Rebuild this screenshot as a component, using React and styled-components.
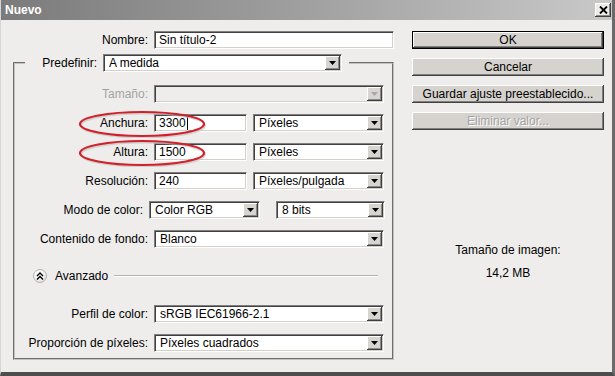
import styled, { createGlobalStyle } from "styled-components";

const GlobalStyle = createGlobalStyle`
  html, body {
    margin: 0;
    padding: 0;
    background: #eeedec;
  }
  body {
    font-family: "Liberation Sans", Arial, sans-serif;
    font-size: 12px;
    color: #000;
  }
  * {
    box-sizing: border-box;
  }
`;

const Arrow = ({ disabled }) => (
  <ArrowBox>
    <svg width="7" height="4" viewBox="0 0 7 4">
      <path d="M0 0h7L3.5 4z" fill={disabled ? "#a8a8a8" : "#000"} />
    </svg>
  </ArrowBox>
);

const Select = ({ width, value, disabled }) => (
  <SelectBox width={width} disabled={disabled}>
    <SelectText>{value}</SelectText>
    <Arrow disabled={disabled} />
  </SelectBox>
);

const FormRow = ({ label, disabled, mark, children }) => (
  <Row>
    <Label disabled={disabled}>{label}</Label>
    <Fields>{children}</Fields>
    {mark && (
      <Mark width="130" height="28" viewBox="0 0 130 28">
        <ellipse cx="65" cy="14" rx="62" ry="12" fill="none" stroke="#bdbdbd" strokeWidth="2" transform="translate(1 1.5)" opacity="0.6" />
        <ellipse cx="65" cy="14" rx="62" ry="12" fill="none" stroke="#d2202b" strokeWidth="2.2" />
      </Mark>
    )}
  </Row>
);

export default function App() {
  return (
    <>
      <GlobalStyle />
      <Dialog>
        <TitleBar>
          <Title>Nuevo</Title>
          <CloseButton>
            <svg width="9" height="8" viewBox="0 0 9 8">
              <path d="M1 0.5l7 7M8 0.5l-7 7" stroke="#000" strokeWidth="1.8" />
            </svg>
          </CloseButton>
        </TitleBar>
        <Body>
          <LeftColumn>
            <NameRow>
              <NameLabel>Nombre:</NameLabel>
              <TextInput width={240}>Sin título-2</TextInput>
            </NameRow>
            <Group>
              <Legend>
                <LegendLabel>Predefinir:</LegendLabel>
                <Select width={239} value="A medida" />
              </Legend>
              <Rows>
                <FormRow label="Tamaño:" disabled>
                  <Select width={230} value="" disabled />
                </FormRow>
                <FormRow label="Anchura:" mark>
                  <TextInput width={93}>
                    3300<Caret />
                  </TextInput>
                  <Select width={131} value="Píxeles" />
                </FormRow>
                <FormRow label="Altura:" mark>
                  <TextInput width={93}>1500</TextInput>
                  <Select width={131} value="Píxeles" />
                </FormRow>
                <FormRow label="Resolución:">
                  <TextInput width={93}>240</TextInput>
                  <Select width={131} value="Píxeles/pulgada" />
                </FormRow>
                <FormRow label="Modo de color:">
                  <Select width={111} value="Color RGB" />
                  <Spacer />
                  <Select width={109} value="8 bits" />
                </FormRow>
                <FormRow label="Contenido de fondo:">
                  <Select width={230} value="Blanco" />
                </FormRow>
                <Advanced>
                  <ToggleCircle>
                    <svg width="8" height="8" viewBox="0 0 8 8">
                      <path d="M1 4l3-3 3 3M1 7.5l3-3 3 3" fill="none" stroke="#000" strokeWidth="1.4" />
                    </svg>
                  </ToggleCircle>
                  <AdvancedText>Avanzado</AdvancedText>
                  <Rule />
                </Advanced>
                <FormRow label="Perfil de color:">
                  <Select width={230} value="sRGB IEC61966-2.1" />
                </FormRow>
                <FormRow label="Proporción de píxeles:">
                  <Select width={230} value="Píxeles cuadrados" />
                </FormRow>
              </Rows>
            </Group>
          </LeftColumn>
          <RightColumn>
            <Button primary>OK</Button>
            <Button>Cancelar</Button>
            <Button>Guardar ajuste preestablecido...</Button>
            <Button disabled>Eliminar valor...</Button>
            <SizeInfo>
              <div>Tamaño de imagen:</div>
              <div>14,2 MB</div>
            </SizeInfo>
          </RightColumn>
        </Body>
      </Dialog>
    </>
  );
}

const Dialog = styled.div`
  width: 615px;
  height: 376px;
  display: flex;
  flex-direction: column;
  background: #eeedec;
  border-left: 1px solid #d6d6d6;
  border-right: 3px solid #6a6a6a;
  border-bottom: 4px solid #4e4e4e;
  overflow: hidden;
`;

const TitleBar = styled.div`
  height: 20px;
  flex: none;
  display: flex;
  align-items: center;
  justify-content: space-between;
  padding: 0 1px 0 4px;
  background: linear-gradient(to right, #7b7b7b 0%, #9c9c9c 45%, #c9c9c9 100%);
`;

const Title = styled.span`
  color: #fff;
  font-weight: bold;
  font-size: 12px;
`;

const CloseButton = styled.div`
  width: 16px;
  height: 14px;
  display: flex;
  align-items: center;
  justify-content: center;
  background: #ecebe8;
  box-shadow: inset -1px -1px #404040, inset 1px 1px #fff, inset -2px -2px #8a8a8a;
`;

const Body = styled.div`
  flex: 1;
  display: flex;
  padding-top: 11px;
`;

const LeftColumn = styled.div`
  width: 393px;
  padding-left: 12px;
  display: flex;
  flex-direction: column;
`;

const NameRow = styled.div`
  display: flex;
  align-items: center;
  gap: 6px;
`;

const NameLabel = styled.span`
  width: 135px;
  text-align: right;
`;

const TextInput = styled.div`
  width: ${(p) => p.width}px;
  height: 18px;
  display: flex;
  align-items: center;
  padding-left: 4px;
  background: #fff;
  border: 1px solid;
  border-color: #7f7f7f #fff #fff #7f7f7f;
  box-shadow: inset 1px 1px #404040, inset -1px -1px #d4d0c8;
  white-space: nowrap;
`;

const Caret = styled.span`
  display: inline-block;
  width: 1px;
  height: 13px;
  background: #000;
  margin-left: 1px;
`;

const SelectBox = styled.div`
  width: ${(p) => p.width}px;
  height: 18px;
  flex: none;
  display: flex;
  align-items: stretch;
  background: ${(p) => (p.disabled ? "#eeedec" : "#fff")};
  border: 1px solid;
  border-color: #7f7f7f #fff #fff #7f7f7f;
  box-shadow: inset 1px 1px #404040, inset -1px -1px #d4d0c8;
  padding: 1px;
`;

const SelectText = styled.span`
  flex: 1;
  display: flex;
  align-items: center;
  padding-left: 4px;
  white-space: nowrap;
  overflow: hidden;
`;

const ArrowBox = styled.span`
  width: 15px;
  flex: none;
  display: flex;
  align-items: center;
  justify-content: center;
  background: #d8d5d0;
  box-shadow: inset -1px -1px #404040, inset 1px 1px #fff, inset -2px -2px #8a8a8a;
`;

const Group = styled.fieldset`
  width: 381px;
  margin: 4px 0 0;
  padding: 13px 7px 6px 0;
  border: 2px groove #c2c2c2;
  min-width: 0;
`;

const Legend = styled.legend`
  display: flex;
  align-items: center;
  gap: 6px;
  margin-left: 10px;
  padding: 0 7px 0 0;
  height: 19px;
`;

const LegendLabel = styled.span`
  width: 72px;
  text-align: right;
`;

const Rows = styled.div`
  display: flex;
  flex-direction: column;
  gap: 11px;
`;

const Row = styled.div`
  position: relative;
  display: flex;
  align-items: center;
  height: 18px;
`;

const Label = styled.span`
  width: 133px;
  margin-right: 6px;
  text-align: right;
  white-space: nowrap;
  color: ${(p) => (p.disabled ? "#a3a3a3" : "#000")};
`;

const Fields = styled.div`
  display: flex;
  gap: 6px;
`;

const Spacer = styled.span`
  width: 4px;
`;

const Mark = styled.svg`
  position: absolute;
  left: 62px;
  top: -4px;
  pointer-events: none;
`;

const Advanced = styled.div`
  display: flex;
  align-items: center;
  height: 16px;
  margin: 9px 0 10px;
  padding-left: 18px;
`;

const ToggleCircle = styled.span`
  width: 14px;
  height: 14px;
  border-radius: 50%;
  display: flex;
  align-items: center;
  justify-content: center;
  background: radial-gradient(circle at 40% 35%, #ffffff 0%, #f2f2f2 50%, #cfcfcf 100%);
  border: 1px solid #b4b4b4;
`;

const AdvancedText = styled.span`
  margin: 0 6px 0 8px;
`;

const Rule = styled.span`
  flex: 1;
  height: 2px;
  margin-right: 7px;
  border-top: 1px solid #b4b4b4;
  border-bottom: 1px solid #fff;
`;

const RightColumn = styled.div`
  width: 192px;
  margin-left: 18px;
  display: flex;
  flex-direction: column;
  gap: 9px;
`;

const Button = styled.div`
  height: 18px;
  display: flex;
  align-items: center;
  justify-content: center;
  background: #d6d3ce;
  color: ${(p) => (p.disabled ? "#a3a3a3" : "#000")};
  text-shadow: ${(p) => (p.disabled ? "1px 1px #fff" : "none")};
  border: ${(p) => (p.primary ? "1px solid #000" : "none")};
  box-shadow: inset -1px -1px #404040, inset 1px 1px #fff, inset -2px -2px #808080;
`;

const SizeInfo = styled.div`
  margin-top: 104px;
  display: flex;
  flex-direction: column;
  align-items: center;
  gap: 9px;
  line-height: 14px;
`;
